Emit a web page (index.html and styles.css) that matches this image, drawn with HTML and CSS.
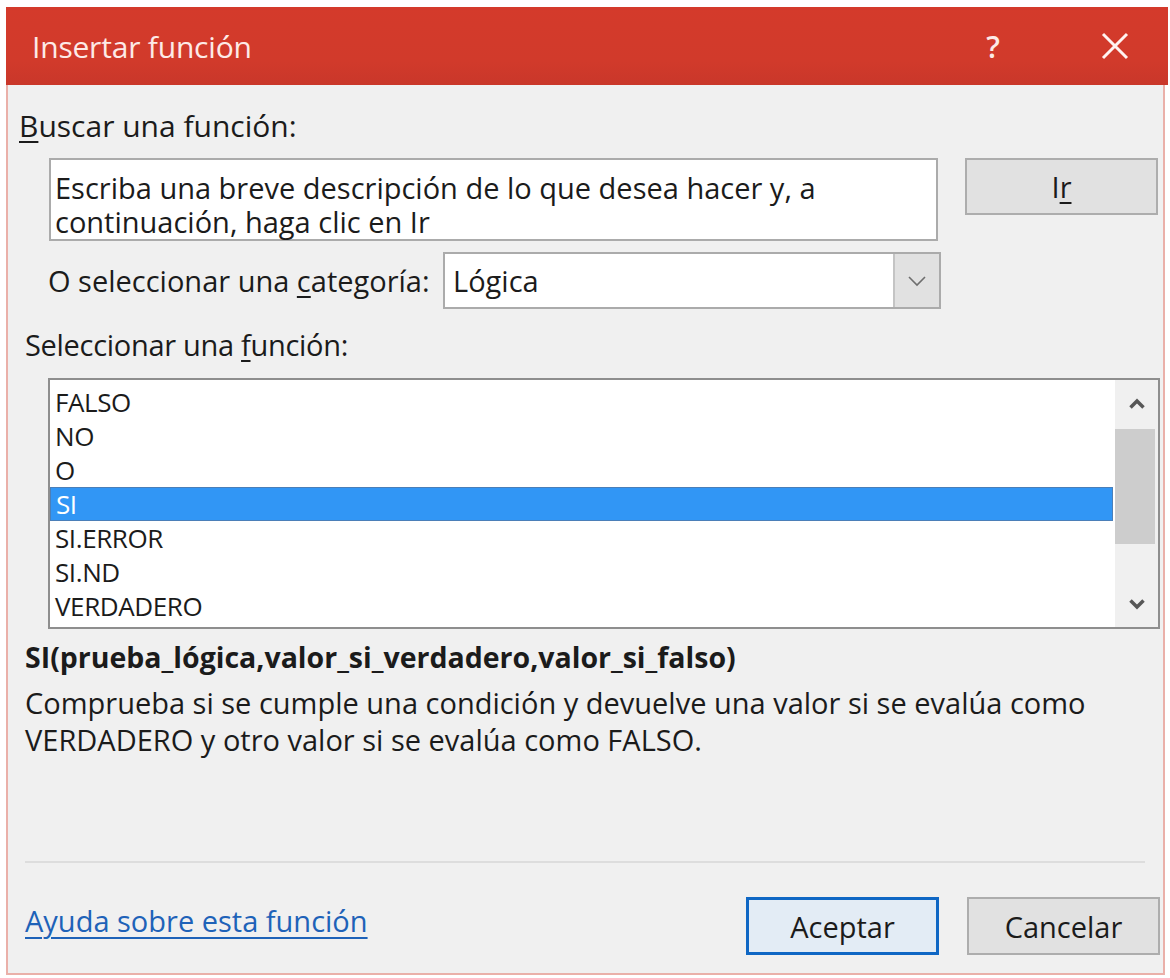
FILE: index.html
```html
<!DOCTYPE html>
<html lang="es">
<head>
<meta charset="utf-8">
<title>Insertar función</title>
<link rel="stylesheet" href="styles.css">
</head>
<body>
<div class="dialog">
  <header class="titlebar">
    <span class="title">Insertar función</span>
    <span class="help">?</span>
    <span class="close">
      <svg width="28" height="28" viewBox="0 0 28 28"><path d="M2 2 L26 26 M26 2 L2 26" stroke="#fff3f1" stroke-width="3" fill="none"/></svg>
    </span>
  </header>

  <main class="content">
    <div class="label label-search"><u>B</u>uscar una función:</div>

    <div class="search-row">
      <div class="search-box">Escriba una breve descripción de lo que desea hacer y, a continuación, haga clic en Ir</div>
      <button class="btn btn-go">I<u>r</u></button>
    </div>

    <div class="category-row">
      <span class="label">O seleccionar una <u>c</u>ategoría:</span>
      <div class="combo">
        <span class="combo-value">Lógica</span>
        <span class="combo-arrow">
          <svg width="20" height="12" viewBox="0 0 20 12"><path d="M2 2 L10 10 L18 2" stroke="#6e6e6e" stroke-width="1.6" fill="none"/></svg>
        </span>
      </div>
    </div>

    <div class="label label-select">Seleccionar una <u>f</u>unción:</div>

    <div class="listbox">
      <ul class="items">
        <li>FALSO</li>
        <li>NO</li>
        <li>O</li>
        <li class="selected">SI</li>
        <li>SI.ERROR</li>
        <li>SI.ND</li>
        <li>VERDADERO</li>
      </ul>
      <div class="scrollbar">
        <span class="arrow">
          <svg width="18" height="12" viewBox="0 0 18 12"><path d="M2.5 9.5 L9 3 L15.5 9.5" stroke="#575757" stroke-width="3.5" fill="none"/></svg>
        </span>
        <div class="track"><div class="thumb"></div></div>
        <span class="arrow">
          <svg width="18" height="12" viewBox="0 0 18 12"><path d="M2.5 2.5 L9 9 L15.5 2.5" stroke="#575757" stroke-width="3.5" fill="none"/></svg>
        </span>
      </div>
    </div>

    <div class="syntax">SI(prueba_lógica,valor_si_verdadero,valor_si_falso)</div>
    <p class="description">Comprueba si se cumple una condición y devuelve una valor si se evalúa como VERDADERO y otro valor si se evalúa como FALSO.</p>

    <hr class="separator">

    <footer class="footer">
      <a class="help-link" href="#">Ayuda sobre esta función</a>
      <div class="actions">
        <button class="btn btn-default">Aceptar</button>
        <button class="btn">Cancelar</button>
      </div>
    </footer>
  </main>
</div>
</body>
</html>
```

FILE: styles.css
```css
* {
  box-sizing: border-box;
}

html, body {
  margin: 0;
  padding: 0;
  background: #ffffff;
}

body {
  font-family: "Open Sans", "Noto Sans", "Liberation Sans", sans-serif;
  color: #1b1b1b;
  font-size: 29px;
}

.dialog {
  margin: 7px 5px 0 6px;
  height: 968px;
  background: #f0f0f0;
  border: 2px solid #eab0a9;
  border-top: none;
  display: flex;
  flex-direction: column;
}

/* red window caption */
.titlebar {
  height: 78px;
  margin: 0 -5px 0 -2px;
  background: linear-gradient(#d43a2b 0%, #d13a2b 70%, #c9372a 100%);
  display: flex;
  align-items: center;
  padding-left: 26px;
  color: #fdeae7;
}

.title {
  font-size: 30px;
  flex: 1;
  letter-spacing: -0.2px;
}

.help {
  font-size: 30px;
  font-weight: 600;
  width: 30px;
  text-align: center;
  margin-right: 93px;
}

.close {
  display: flex;
  margin-right: 39px;
}

.content {
  flex: 1;
  padding: 24px 3px 0 11px;
  display: flex;
  flex-direction: column;
}

.label {
  line-height: 34px;
  white-space: nowrap;
}

.label u, .btn u {
  text-decoration-thickness: 2px;
  text-underline-offset: 4px;
}

.label-search {
  font-size: 30px;
}

/* search text + Ir */
.search-row {
  display: flex;
  align-items: flex-start;
  margin-top: 15px;
  padding-left: 30px;
}

.search-box {
  width: 889px;
  height: 83px;
  background: #ffffff;
  border: 2px solid #ababab;
  padding: 11px 20px 0 4px;
  line-height: 34px;
}

.btn {
  font: inherit;
  color: #1b1b1b;
  width: 193px;
  height: 57px;
  background: #e1e1e1;
  border: 2px solid #adadad;
  padding: 0;
  line-height: 1;
}

.btn-go {
  margin-left: 27px;
}

/* category picker */
.category-row {
  display: flex;
  align-items: center;
  margin-top: 11px;
  padding-left: 29px;
}

.category-row .label {
  width: 395px;
}

.combo {
  width: 498px;
  height: 57px;
  background: #ffffff;
  border: 2px solid #ababab;
  display: flex;
  align-items: stretch;
}

.combo-value {
  flex: 1;
  display: flex;
  align-items: center;
  padding-left: 8px;
}

.combo-arrow {
  width: 46px;
  background: #e1e1e1;
  border-left: 2px solid #c4c4c4;
  display: flex;
  align-items: center;
  justify-content: center;
}

.label-select {
  margin-top: 19px;
  padding-left: 6px;
  letter-spacing: -0.3px;
}

/* function list */
.listbox {
  margin: 16px 0 0 29px;
  height: 251px;
  background: #ffffff;
  border: 2px solid #8e8e8e;
  display: flex;
}

.items {
  list-style: none;
  margin: 0;
  padding: 5px 0 0 0;
  flex: 1;
}

.items li {
  height: 34px;
  line-height: 34px;
  padding-left: 5px;
  font-size: 26px;
  letter-spacing: -0.4px;
}

.items li.selected {
  background: #3196f5;
  color: #ffffff;
  border: 1px solid #4b7fb8;
  line-height: 32px;
}

.scrollbar {
  width: 43px;
  margin-left: 2px;
  background: #f0f0f0;
  display: flex;
  flex-direction: column;
}

.scrollbar .arrow {
  height: 47px;
  display: flex;
  align-items: center;
  justify-content: center;
}

.track {
  flex: 1;
  padding-top: 2px;
}

.thumb {
  height: 115px;
  background: #cdcdcd;
  margin-right: 3px;
}

.syntax {
  font-weight: bold;
  font-size: 28.5px;
  margin-top: 11px;
  padding-left: 6px;
  line-height: 34px;
}

.description {
  margin: 10px 0 0 0;
  padding-left: 6px;
  line-height: 37px;
  width: 1100px;
}

.separator {
  border: none;
  border-top: 2px solid #dddddd;
  margin: auto 15px 0 6px;
}

.footer {
  display: flex;
  justify-content: space-between;
  align-items: flex-start;
  padding: 34px 0 0 6px;
  height: 110px;
}

.help-link {
  color: #1e62b8;
  text-decoration: underline;
  text-decoration-thickness: 2px;
  text-underline-offset: 5px;
  margin-top: 7px;
  line-height: 34px;
}

.actions {
  display: flex;
  gap: 28px;
}

.actions .btn {
  height: 58px;
}

.btn-default {
  border: 3px solid #0f67c4;
  background: #e3ecf5;
}
```
